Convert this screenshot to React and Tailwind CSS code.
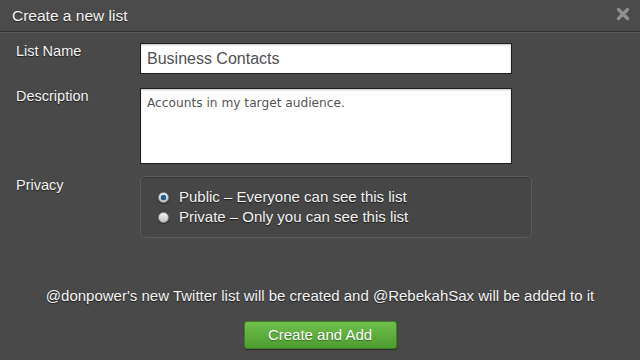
import React from "react";

function Radio({ checked }) {
  return (
    <span className="relative inline-flex items-center justify-center w-[11px] h-[11px] rounded-full border border-[#8a8a8a] bg-gradient-to-b from-[#f4f4f4] to-[#c4c4c4] shadow-[0_1px_1px_rgba(0,0,0,0.4)]">
      {checked && (
        <span className="w-[5px] h-[5px] rounded-full bg-[#1d5f8f] shadow-[0_0_1px_#0b3050]" />
      )}
    </span>
  );
}

export default function App() {
  return (
    <div className="w-[640px] h-[360px] bg-[#494949] text-white font-['Liberation_Sans',Arial,sans-serif] flex flex-col overflow-hidden">
      {/* header */}
      <div className="h-[32px] shrink-0 bg-[#4b4b4b] border-b border-[#2f2f2f] shadow-[0_1px_0_#595959] flex items-center justify-between pl-[12px] pr-[10px]">
        <span className="text-[15.5px] text-[#f2f2f2] [text-shadow:0_1px_1px_rgba(0,0,0,0.5)]">
          Create a new list
        </span>
        <svg width="14" height="14" viewBox="0 0 14 14" className="mb-[4px]">
          <path
            d="M2.5 2.5 L11.5 11.5 M11.5 2.5 L2.5 11.5"
            stroke="#8f8f8f"
            strokeWidth="3.4"
            strokeLinecap="round"
          />
        </svg>
      </div>

      <div className="pl-[16px] flex flex-col">
        {/* list name */}
        <div className="flex mt-[11px]">
          <label className="w-[124px] text-[14.5px] leading-[16px] text-[#f2f2f2] [text-shadow:0_1px_1px_rgba(0,0,0,0.6)]">
            List Name
          </label>
          <div className="w-[372px] h-[31px] bg-white border border-[#1f1f1f] shadow-[inset_0_1px_2px_rgba(0,0,0,0.25)] flex items-center pl-[6px] text-[16px] text-[#505050]">
            Business Contacts
          </div>
        </div>

        {/* description */}
        <div className="flex mt-[14px]">
          <label className="w-[124px] text-[14.5px] leading-[16px] text-[#f2f2f2] [text-shadow:0_1px_1px_rgba(0,0,0,0.6)]">
            Description
          </label>
          <div className="w-[372px] h-[76px] bg-white border border-[#1f1f1f] shadow-[inset_0_1px_2px_rgba(0,0,0,0.25)] pl-[6px] pt-[6px] text-[12.2px] leading-[16px] text-[#555] font-['DejaVu_Sans',Verdana,sans-serif]">
            Accounts in my target audience.
          </div>
        </div>

        {/* privacy */}
        <div className="flex mt-[12px]">
          <label className="w-[124px] pt-[1px] text-[14.5px] leading-[16px] text-[#f2f2f2] [text-shadow:0_1px_1px_rgba(0,0,0,0.6)]">
            Privacy
          </label>
          <div className="w-[392px] h-[62px] rounded-[5px] border border-[#5b5b5b] bg-[#464646] shadow-[inset_0_1px_1px_rgba(0,0,0,0.25)] pl-[17px] pt-[10px] flex flex-col text-[15px] leading-[20px] text-[#f2f2f2] [text-shadow:0_1px_1px_rgba(0,0,0,0.6)]">
            <div className="flex items-center gap-[10px]">
              <Radio checked />
              <span>Public – Everyone can see this list</span>
            </div>
            <div className="flex items-center gap-[10px]">
              <Radio />
              <span>Private – Only you can see this list</span>
            </div>
          </div>
        </div>
      </div>

      {/* footer */}
      <p className="mt-[49px] text-center text-[15px] leading-[17px] text-[#f2f2f2] [text-shadow:0_1px_1px_rgba(0,0,0,0.6)]">
        @donpower's new Twitter list will be created and @RebekahSax will be added to it
      </p>
      <div className="flex justify-center mt-[17px]">
        <button className="w-[153px] h-[28px] rounded-[3px] border border-[#3f7f27] bg-gradient-to-b from-[#70c04a] to-[#4c9c30] text-[15px] text-white [text-shadow:0_1px_1px_rgba(0,0,0,0.35)] shadow-[0_1px_1px_rgba(0,0,0,0.4)]">
          Create and Add
        </button>
      </div>
    </div>
  );
}
